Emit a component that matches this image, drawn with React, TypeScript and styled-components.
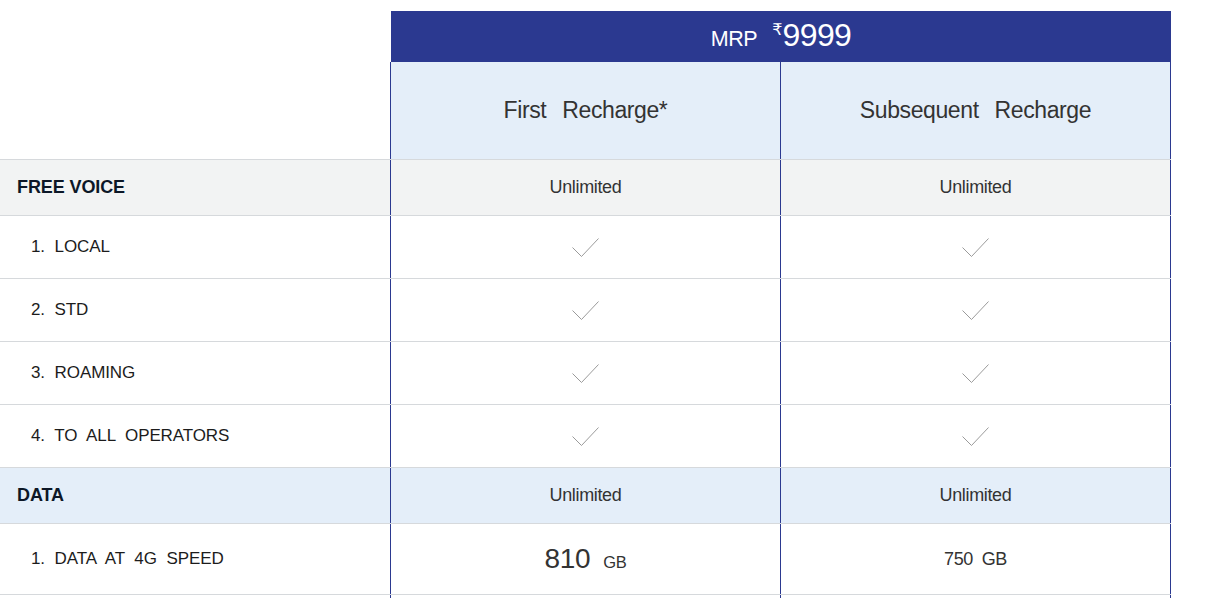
import React from 'react';
import styled, { createGlobalStyle } from 'styled-components';

const GlobalStyle = createGlobalStyle`
    body {
        margin: 0;
        background: #ffffff;
        font-family: "Liberation Sans", Arial, Helvetica, sans-serif;
    }
`;

const BLUE = '#2b3990';
const LINE = '#d6d9dc';

const Table = styled.div`
    width: 1171px;
    display: flex;
    flex-direction: column;
`;

const Row = styled.div<{ height: number, tone?: 'gray' | 'blue', ruled?: boolean }>`
    display: grid;
    grid-template-columns: 390px 390px 391px;
    height: ${({ height }) => height}px;
    box-sizing: border-box;
    border-top: ${({ ruled }) => ruled ? `1px solid ${LINE}` : 'none'};
    background: ${({ tone }) => tone === 'gray' ? '#f2f3f3' : tone === 'blue' ? '#e4eef9' : '#ffffff'};
`;

const Label = styled.div<{ bold?: boolean }>`
    display: flex;
    align-items: center;
    padding-left: ${({ bold }) => bold ? 17 : 31}px;
    font-size: ${({ bold }) => bold ? 18 : 17}px;
    font-weight: ${({ bold }) => bold ? 700 : 400};
    letter-spacing: -0.1px;
    word-spacing: ${({ bold }) => bold ? '0' : '5px'};
    color: ${({ bold }) => bold ? '#0c1727' : '#1c1c1c'};
    white-space: pre;
`;

const Cell = styled.div<{ last?: boolean }>`
    display: flex;
    align-items: center;
    justify-content: center;
    box-sizing: border-box;
    border-left: 1px solid ${BLUE};
    border-right: ${({ last }) => last ? `1px solid ${BLUE}` : 'none'};
    font-size: 18px;
    letter-spacing: -0.35px;
    color: #333333;
    white-space: pre;
`;

const Spacer = styled.div``;

const Banner = styled.div`
    grid-column: 2 / 4;
    margin: 11px 0 0 1px;
    background: ${BLUE};
    color: #ffffff;
    display: flex;
    align-items: baseline;
    justify-content: center;
    padding-top: 6px;
    box-sizing: border-box;
`;

const Mrp = styled.span`
    font-size: 21.5px;
    letter-spacing: -0.4px;
    margin-right: 15px;
`;

const Rupee = styled.span`
    font-family: "DejaVu Sans", "Noto Sans", sans-serif;
    font-size: 16px;
    position: relative;
    top: -11px;
`;

const Price = styled.span`
    font-size: 32px;
    letter-spacing: -0.6px;
`;

const HeadCell = styled(Cell)`
    background: #e4eef9;
    font-size: 23px;
    letter-spacing: -0.4px;
    word-spacing: 2px;
    color: #333333;
`;

const Big = styled.span`
    font-size: 28px;
    margin-right: 13px;
    letter-spacing: -0.3px;
`;

const Unit = styled.span`
    font-size: 16.5px;
    position: relative;
    top: 3px;
`;

const Check = () => (
    <svg width="27" height="19" viewBox="0 0 27 19">
        <polyline points="0.5,9.5 9.5,18.5 26.5,0.5" fill="none" stroke="#9a9a9a" strokeWidth="1" />
    </svg>
);

interface Item {
    label: string,
    bold?: boolean,
    tone?: 'gray' | 'blue',
    height: number,
    first: React.ReactNode,
    next: React.ReactNode
}

const items: Array<Item> = [
    { label: 'FREE VOICE', bold: true, tone: 'gray', height: 56, first: 'Unlimited', next: 'Unlimited' },
    { label: '1. LOCAL', height: 63, first: <Check />, next: <Check /> },
    { label: '2. STD', height: 63, first: <Check />, next: <Check /> },
    { label: '3. ROAMING', height: 63, first: <Check />, next: <Check /> },
    { label: '4. TO ALL OPERATORS', height: 63, first: <Check />, next: <Check /> },
    { label: 'DATA', bold: true, tone: 'blue', height: 56, first: 'Unlimited', next: 'Unlimited' },
    {
        label: '1. DATA AT 4G SPEED',
        height: 71,
        first: <><Big>810</Big><Unit>GB</Unit></>,
        next: <span style={{ wordSpacing: '4px' }}>750 GB</span>
    },
    { label: '', height: 4, first: '', next: '' },
];

const App: React.FC = () => {
    return (
        <>
            <GlobalStyle />
            <Table>
                <Row height={62}>
                    <Spacer />
                    <Banner>
                        <Mrp>MRP</Mrp>
                        <Rupee>₹</Rupee>
                        <Price>9999</Price>
                    </Banner>
                </Row>
                <Row height={97}>
                    <Spacer />
                    <HeadCell>First  Recharge*</HeadCell>
                    <HeadCell last>Subsequent  Recharge</HeadCell>
                </Row>
                {items.map((item, index) => (
                    <Row key={index} height={item.height} tone={item.tone} ruled>
                        <Label bold={item.bold}>{item.label}</Label>
                        <Cell>{item.first}</Cell>
                        <Cell last>{item.next}</Cell>
                    </Row>
                ))}
            </Table>
        </>
    );
};

export default App;
